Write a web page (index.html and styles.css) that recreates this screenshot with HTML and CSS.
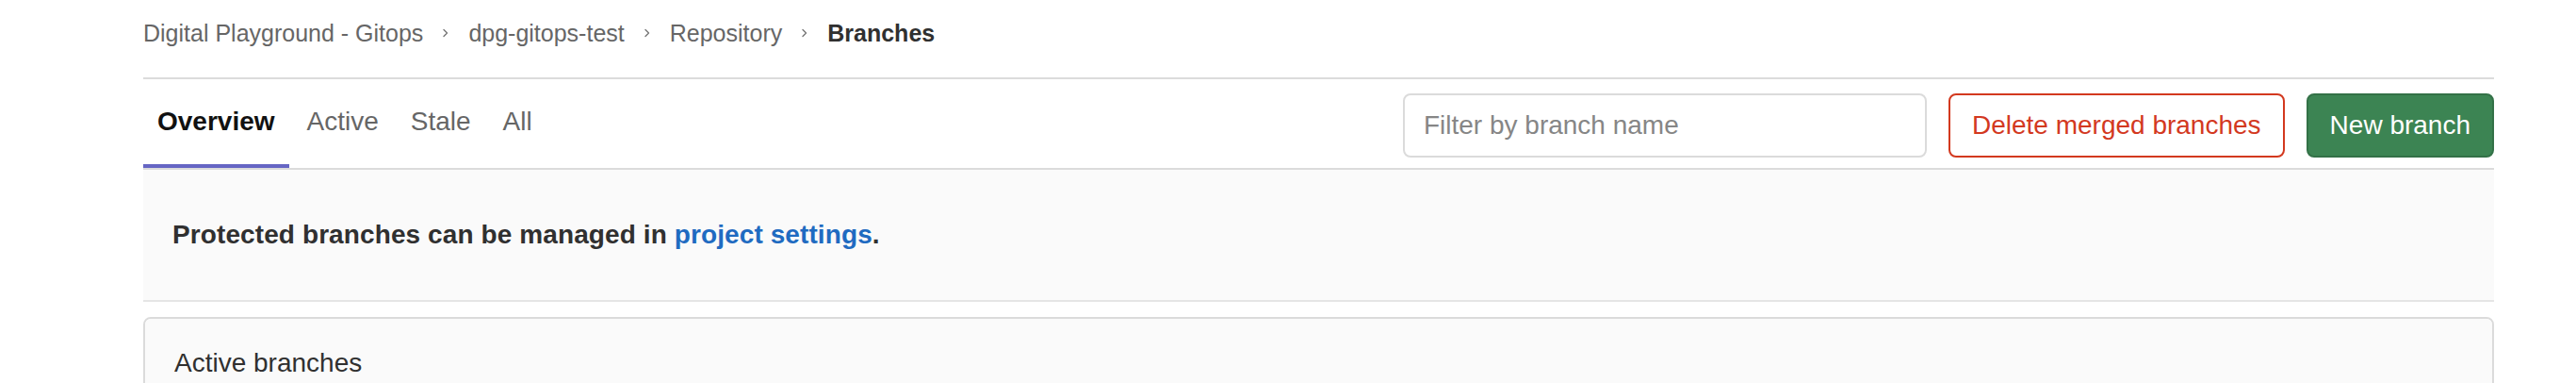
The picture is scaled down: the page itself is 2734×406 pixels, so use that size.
FILE: index.html
```html
<!DOCTYPE html>
<html lang="en">
<head>
<meta charset="utf-8">
<title>Branches</title>
<link rel="stylesheet" href="styles.css">
</head>
<body>
<div class="page">
  <nav class="breadcrumbs">
    <a class="crumb" href="#">Digital Playground - Gitops</a>
    <span class="sep"><svg width="16" height="16" viewBox="0 0 16 16"><path d="M6 4.5l3.5 3.5L6 11.5" fill="none" stroke="#777" stroke-width="1.4" stroke-linecap="round" stroke-linejoin="round"/></svg></span>
    <a class="crumb" href="#">dpg-gitops-test</a>
    <span class="sep"><svg width="16" height="16" viewBox="0 0 16 16"><path d="M6 4.5l3.5 3.5L6 11.5" fill="none" stroke="#777" stroke-width="1.4" stroke-linecap="round" stroke-linejoin="round"/></svg></span>
    <a class="crumb" href="#">Repository</a>
    <span class="sep"><svg width="16" height="16" viewBox="0 0 16 16"><path d="M6 4.5l3.5 3.5L6 11.5" fill="none" stroke="#777" stroke-width="1.4" stroke-linecap="round" stroke-linejoin="round"/></svg></span>
    <strong class="crumb current">Branches</strong>
  </nav>

  <div class="top-area">
    <ul class="tabs">
      <li><a class="tab active" href="#">Overview</a></li>
      <li><a class="tab" href="#">Active</a></li>
      <li><a class="tab" href="#">Stale</a></li>
      <li><a class="tab" href="#">All</a></li>
    </ul>
    <div class="actions">
      <input class="filter" type="search" placeholder="Filter by branch name">
      <button class="btn btn-danger" type="button">Delete merged branches</button>
      <button class="btn btn-success" type="button">New branch</button>
    </div>
  </div>

  <div class="info">
    <p>Protected branches can be managed in <a href="#">project settings</a>.</p>
  </div>

  <div class="card">
    <div class="card-header">Active branches</div>
    <div class="card-body"></div>
  </div>
</div>
</body>
</html>
```

FILE: styles.css
```css
html, body {
  margin: 0;
  padding: 0;
  height: 406px;
  overflow: hidden;
  background: #fff;
}

body {
  font-family: "Liberation Sans", Arial, sans-serif;
  color: #303030;
}

.page {
  margin: 0 87px 0 152px;
}

/* Breadcrumbs */
.breadcrumbs {
  display: flex;
  align-items: center;
  box-sizing: content-box;
  height: 70px;
  padding-bottom: 12px;
  border-bottom: 2px solid #dcdcdc;
}

.crumb {
  font-size: 25px;
  line-height: 40px;
  color: #666;
  text-decoration: none;
}

.crumb.current {
  color: #303030;
  font-weight: bold;
}

.sep {
  display: flex;
  align-items: center;
  margin: 0 16px;
}

/* Top area */
.top-area {
  display: flex;
  justify-content: space-between;
  align-items: stretch;
  height: 94px;
  border-bottom: 2px solid #dbdbdb;
}

.tabs {
  display: flex;
  gap: 4px;
  list-style: none;
  margin: 0;
  padding: 0;
}

.tabs li {
  display: flex;
}

.tab {
  display: flex;
  align-items: center;
  padding: 0 15px;
  font-size: 28px;
  color: #666;
  text-decoration: none;
  border-bottom: 4px solid transparent;
}

.tab.active {
  color: #111;
  font-weight: bold;
  border-bottom-color: #6666c4;
}

.actions {
  display: flex;
  align-items: center;
  gap: 23px;
  padding-top: 3px;
}

.filter {
  width: 556px;
  height: 68px;
  box-sizing: border-box;
  border: 2px solid #dbdbdb;
  border-radius: 8px;
  padding: 0 20px;
  font-family: "Liberation Sans", Arial, sans-serif;
  font-size: 28px;
  color: #303030;
  outline: none;
  -webkit-appearance: none;
  appearance: none;
}

.filter::placeholder {
  color: #868686;
}

.btn {
  height: 68px;
  box-sizing: border-box;
  border-radius: 8px;
  padding: 0 23px;
  font-family: "Liberation Sans", Arial, sans-serif;
  font-size: 28px;
  cursor: pointer;
}

.btn-danger {
  background: #fff;
  color: #d3391f;
  border: 2px solid #d3391f;
}

.btn-success {
  background: #3c8453;
  color: #fff;
  border: 2px solid #337147;
}

/* Info bar */
.info {
  display: flex;
  align-items: center;
  height: 138px;
  padding: 0 31px;
  background: #fafafa;
  border-bottom: 2px solid #e5e5e5;
}

.info p {
  margin: 0;
  font-size: 28px;
  font-weight: bold;
  letter-spacing: 0.1px;
  color: #303030;
}

.info a {
  color: #1f6bc1;
  text-decoration: none;
}

/* Card */
.card {
  margin-top: 16px;
  border: 2px solid #dbdbdb;
  border-radius: 8px;
  overflow: hidden;
}

.card-header {
  padding: 27px 31px;
  line-height: 40px;
  font-size: 28px;
  color: #303030;
  background: #fafafa;
  border-bottom: 2px solid #e5e5e5;
}

.card-body {
  height: 200px;
  background: #fff;
}
```
